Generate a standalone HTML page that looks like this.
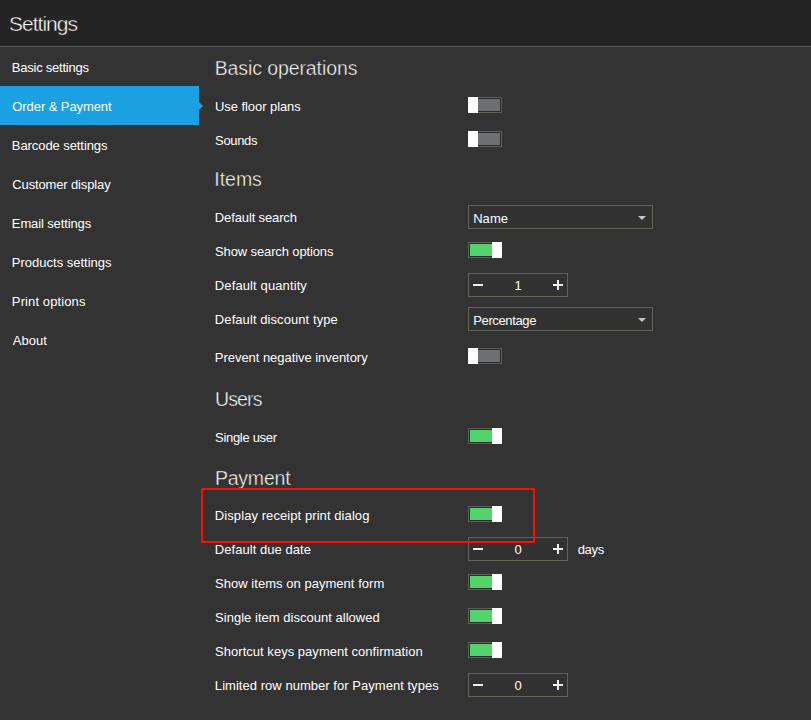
<!DOCTYPE html>
<html><head><meta charset="utf-8"><title>Settings</title>
<style>
html,body{margin:0;padding:0;}
body{width:811px;height:720px;background:#333333;position:relative;overflow:hidden;font-family:"Liberation Sans",sans-serif;color:#fff;}
.hdr{position:absolute;left:0;top:0;width:811px;height:46px;background:#242424;}
.hln{position:absolute;left:0;top:46px;width:811px;height:1px;background:#585c56;}
.sel{position:absolute;left:0;top:86px;width:199px;height:39px;background:#1ba1e2;}
.arr{position:absolute;left:199px;top:101.5px;width:0;height:0;border-top:4.5px solid transparent;border-bottom:4.5px solid transparent;border-left:4.5px solid #1ba1e2;}
.tx{position:absolute;white-space:pre;line-height:normal;color:#fff;}
.sl{-webkit-text-stroke-color:#1ba1e2;}
.hd{color:#fff;-webkit-text-stroke:0.42px #333333;}
.hd.st{-webkit-text-stroke-color:#242424;}
.tg{position:absolute;left:468px;width:34px;height:16px;box-sizing:border-box;border:1px solid #5d6258;background:#2b2b2b;}
.tg i{position:absolute;left:1px;top:1px;right:1px;bottom:1px;background:#6e6f71;}
.tg.on i{background:#53d36c;}
.tg b{position:absolute;top:-1px;width:10px;height:16px;background:#fff;}
.tg.off b{left:-1px;}
.tg.on b{right:-1px;}
.cb{position:absolute;left:468px;width:185px;height:24px;box-sizing:border-box;border:1px solid #5f6459;background:#323232;}
.cb s{position:absolute;left:169px;top:10px;width:0;height:0;border-left:4px solid transparent;border-right:4px solid transparent;border-top:4px solid #c4c4c4;}
.sp{position:absolute;left:468px;width:100px;height:24px;box-sizing:border-box;border:1px solid #5f6459;background:#323232;}
.sp u{position:absolute;background:#f2f2f2;text-decoration:none;}
.sp .mi{left:4px;top:10px;width:10px;height:2px;}
.sp .ph{left:84px;top:10px;width:10px;height:2px;}
.sp .pv{left:88px;top:6px;width:2px;height:10px;}
.sp .nv{position:absolute;left:0;top:0;width:98px;height:22px;line-height:23px;text-align:center;font-size:13px;color:#fff;}
.red{position:absolute;left:201px;top:488px;width:334px;height:55px;box-sizing:border-box;border:2px solid #ff0d00;}
</style></head><body>
<div class="hdr"></div><div class="hln"></div>
<div class="sel"></div><div class="arr"></div>
<div class="tg off" style="top:97px"><i></i><b></b></div>
<div class="tg off" style="top:131px"><i></i><b></b></div>
<div class="cb" style="top:205px"><s></s></div>
<div class="tg on" style="top:242px"><i></i><b></b></div>
<div class="sp" style="top:273px"><u class="mi"></u><span class="nv">1</span><u class="ph"></u><u class="pv"></u></div>
<div class="cb" style="top:307px"><s></s></div>
<div class="tg off" style="top:348px"><i></i><b></b></div>
<div class="tg on" style="top:428px"><i></i><b></b></div>
<div class="tg on" style="top:506px"><i></i><b></b></div>
<div class="sp" style="top:537px"><u class="mi"></u><span class="nv">0</span><u class="ph"></u><u class="pv"></u></div>
<div class="tg on" style="top:574px"><i></i><b></b></div>
<div class="tg on" style="top:608px"><i></i><b></b></div>
<div class="tg on" style="top:642px"><i></i><b></b></div>
<div class="sp" style="top:673px"><u class="mi"></u><span class="nv">0</span><u class="ph"></u><u class="pv"></u></div>
<span class="tx hd st" style="left:9.10px;top:12.10px;font-size:21px;letter-spacing:-1.005px">Settings</span>
<span class="tx mn" style="left:11.87px;top:60.23px;font-size:13px;letter-spacing:-0.236px">Basic settings</span>
<span class="tx mn sl" style="left:12.30px;top:99.23px;font-size:13px;letter-spacing:-0.079px">Order &amp; Payment</span>
<span class="tx mn" style="left:11.87px;top:138.24px;font-size:13px;letter-spacing:-0.080px">Barcode settings</span>
<span class="tx mn" style="left:12.30px;top:177.24px;font-size:13px;letter-spacing:-0.138px">Customer display</span>
<span class="tx mn" style="left:11.87px;top:216.24px;font-size:13px;letter-spacing:-0.123px">Email settings</span>
<span class="tx mn" style="left:11.87px;top:255.24px;font-size:13px;letter-spacing:-0.005px">Products settings</span>
<span class="tx mn" style="left:11.87px;top:294.24px;font-size:13px;letter-spacing:0.105px">Print options</span>
<span class="tx mn" style="left:12.70px;top:333.24px;font-size:13px;letter-spacing:0.079px">About</span>
<span class="tx hd" style="left:214.70px;top:57.05px;font-size:19.5px;letter-spacing:-0.098px">Basic operations</span>
<span class="tx hd" style="left:214.24px;top:168.05px;font-size:19.5px;letter-spacing:-0.010px">Items</span>
<span class="tx hd" style="left:215.02px;top:388.35px;font-size:19.5px;letter-spacing:-0.871px">Users</span>
<span class="tx hd" style="left:214.90px;top:466.95px;font-size:19.5px;letter-spacing:-0.209px">Payment</span>
<span class="tx lb" style="left:214.99px;top:99.23px;font-size:13px;letter-spacing:-0.065px">Use floor plans</span>
<span class="tx lb" style="left:215.07px;top:133.24px;font-size:13px;letter-spacing:-0.354px">Sounds</span>
<span class="tx lb" style="left:214.87px;top:210.24px;font-size:13px;letter-spacing:-0.134px">Default search</span>
<span class="tx lb" style="left:215.07px;top:244.24px;font-size:13px;letter-spacing:-0.127px">Show search options</span>
<span class="tx lb" style="left:214.87px;top:278.24px;font-size:13px;letter-spacing:0.111px">Default quantity</span>
<span class="tx lb" style="left:214.87px;top:312.24px;font-size:13px;letter-spacing:0.076px">Default discount type</span>
<span class="tx lb" style="left:214.87px;top:350.24px;font-size:13px;letter-spacing:-0.045px">Prevent negative inventory</span>
<span class="tx lb" style="left:215.07px;top:430.24px;font-size:13px;letter-spacing:-0.312px">Single user</span>
<span class="tx lb" style="left:214.87px;top:508.24px;font-size:13px;letter-spacing:0.076px">Display receipt print dialog</span>
<span class="tx lb" style="left:214.87px;top:542.24px;font-size:13px;letter-spacing:0.048px">Default due date</span>
<span class="tx lb" style="left:215.07px;top:576.24px;font-size:13px;letter-spacing:0.034px">Show items on payment form</span>
<span class="tx lb" style="left:215.07px;top:610.24px;font-size:13px;letter-spacing:0.022px">Single item discount allowed</span>
<span class="tx lb" style="left:215.07px;top:644.24px;font-size:13px;letter-spacing:0.029px">Shortcut keys payment confirmation</span>
<span class="tx lb" style="left:214.87px;top:678.24px;font-size:13px;letter-spacing:0.037px">Limited row number for Payment types</span>
<span class="tx lb" style="left:473.20px;top:211.24px;font-size:13px;letter-spacing:0.037px">Name</span>
<span class="tx lb" style="left:473.20px;top:313.24px;font-size:13px;letter-spacing:-0.356px">Percentage</span>
<span class="tx lb" style="left:577.70px;top:542.24px;font-size:13px;letter-spacing:-0.300px">days</span>
<div class="red"></div>
</body></html>
